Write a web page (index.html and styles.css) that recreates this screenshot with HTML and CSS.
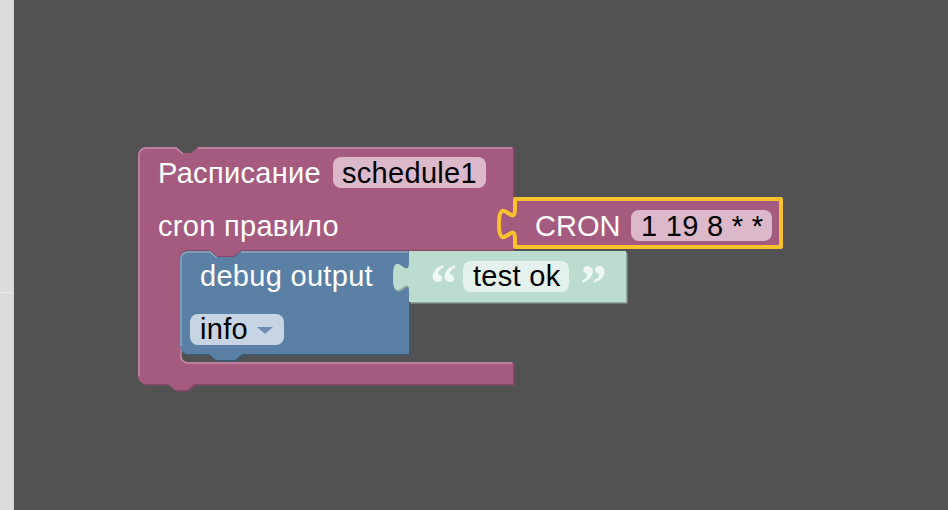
FILE: index.html
```html
<!DOCTYPE html>
<html lang="ru">
<head>
  <meta charset="UTF-8" />
  <meta name="viewport" content="width=device-width, initial-scale=1.0"/>
  <title>Расписание</title>
  <link rel="stylesheet" href="styles.css">
</head>
<body>

<div class="app">
  <div class="toolbox">
    <div class="toolbox-top"></div>
    <div class="toolbox-bottom"></div>
  </div>

  <div class="workspace">
    <svg class="canvas" width="934" height="510" viewBox="14 0 934 510">

      <!-- schedule block -->
      <g class="blk blk-schedule">
        <path class="shade" transform="translate(1.5,1.5)" d="M138,155 A8,8 0 0 1 146,147 H176 L183,153 H191 L198,147 H513 V250 H241 L234,256 H217 L210,250 H188 A8,8 0 0 0 180,258 V354 A8,8 0 0 0 188,362 H513 V384 H194 L187,390 H175 L168,384 H146 A8,8 0 0 1 138,376 Z"/>
        <path class="body" d="M138,155 A8,8 0 0 1 146,147 H176 L183,153 H191 L198,147 H513 V250 H241 L234,256 H217 L210,250 H188 A8,8 0 0 0 180,258 V354 A8,8 0 0 0 188,362 H513 V384 H194 L187,390 H175 L168,384 H146 A8,8 0 0 1 138,376 Z"/>
        <path class="light" d="M139,376 V155 A7,7 0 0 1 146,148 H176 L183,154 M198,148 H512 M181,262 V354 A7,7 0 0 0 188,363 H512"/>
        <text class="label" x="158" y="183">Расписание</text>
        <rect class="field" x="333" y="157" width="153" height="31" rx="8"/>
        <text class="value" x="342" y="183">schedule1</text>
        <text class="label" x="158" y="236">cron правило</text>
      </g>

      <!-- cron block (selected) -->
      <g class="blk blk-cron">
        <path class="body selected" d="M515,199 H781 V247 H515 V239 c0,-20 -16,16 -16,-15 s16,5 16,-15 Z"/>
        <text class="label caps" x="535" y="236">CRON</text>
        <rect class="field" x="631" y="210" width="141" height="31" rx="8"/>
        <text class="value" x="641" y="236">1 19 8 * *</text>
      </g>

      <!-- debug block -->
      <g class="blk blk-debug">
        <path class="shade" transform="translate(1.5,2)" d="M180,259 A8,8 0 0 1 188,251 H210 L217,257 H234 L241,251 H409 V354 H242 L235,360 H216 L209,354 H188 A8,8 0 0 1 180,346 Z"/>
        <path class="body" d="M180,259 A8,8 0 0 1 188,251 H210 L217,257 H234 L241,251 H409 V354 H242 L235,360 H216 L209,354 H188 A8,8 0 0 1 180,346 Z"/>
        <path class="light" d="M181,346 V259 A7,7 0 0 1 188,252 H210 L217,258 M241,252 H408"/>
        <text class="label" x="200" y="286">debug output</text>
        <rect class="field" x="190" y="314" width="94" height="31" rx="8"/>
        <text class="value" x="200" y="339">info</text>
        <polygon class="arrow" points="257,327 273,327 265,334"/>
      </g>

      <!-- text block -->
      <g class="blk blk-text">
        <path class="shade" transform="translate(1.5,1.5)" d="M409,251 H626 V302 H409 V292 c0,-20 -16,16 -16,-15 s16,5 16,-15 Z"/>
        <path class="body" d="M409,251 H626 V302 H409 V292 c0,-20 -16,16 -16,-15 s16,5 16,-15 Z"/>
        <text class="quote" x="430" y="302">“</text>
        <rect class="field" x="463" y="261" width="106" height="31" rx="8"/>
        <text class="value" x="473" y="286">test ok</text>
        <text class="quote" x="580" y="302">”</text>
      </g>

    </svg>
  </div>
</div>

</body>
</html>
```

FILE: styles.css
```css
* { box-sizing: border-box; margin: 0; padding: 0; }
body {
  font-family: 'Liberation Sans', Arial, sans-serif;
  background: #525252;
  overflow: hidden;
}
.app {
  display: flex;
  width: 100vw;
  height: 100vh;
}
.toolbox {
  width: 14px;
  display: flex;
  flex-direction: column;
  background: #dcdcdc;
  border-right: 1px solid #d4d4d4;
}
.toolbox-top {
  height: 293px;
  border-bottom: 1px solid #e9e9e9;
}
.toolbox-bottom {
  flex: 1;
}
.workspace {
  flex: 1;
  background: #525252;
  overflow: hidden;
}
.canvas {
  display: block;
}
.blk text {
  font-family: 'Liberation Sans', Arial, sans-serif;
  font-size: 29px;
  letter-spacing: 0.3px;
}
.blk .caps { letter-spacing: 0; }
.blk .label { fill: #fff; }
.blk .value { fill: #000; }
.blk .light {
  fill: none;
  stroke-width: 1.5;
}

.blk-schedule .body, .blk-cron .body { fill: #a55b80; }
.blk-schedule .shade { fill: #844966; }
.blk-schedule .light { stroke: #c08ca6; }
.blk-schedule .field, .blk-cron .field { fill: #dbb9cb; }

.blk-cron .selected {
  stroke: #f8c22d;
  stroke-width: 4;
  stroke-linejoin: round;
}

.blk-debug .body { fill: #5b80a5; }
.blk-debug .shade { fill: #40566d; }
.blk-debug .light { stroke: #8ca6c0; }
.blk-debug .field { fill: #c6d4e3; }
.blk-debug .arrow { fill: #6b8db2; }

.blk-text .body { fill: #bcdccf; }
.blk-text .shade { fill: #8fa89e; }
.blk-text .field { fill: #e5f1ec; }
.blk-text .quote {
  font-family: 'Liberation Serif', serif;
  font-weight: bold;
  font-size: 54px;
  letter-spacing: 0;
  fill: #eef7f3;
}
```
